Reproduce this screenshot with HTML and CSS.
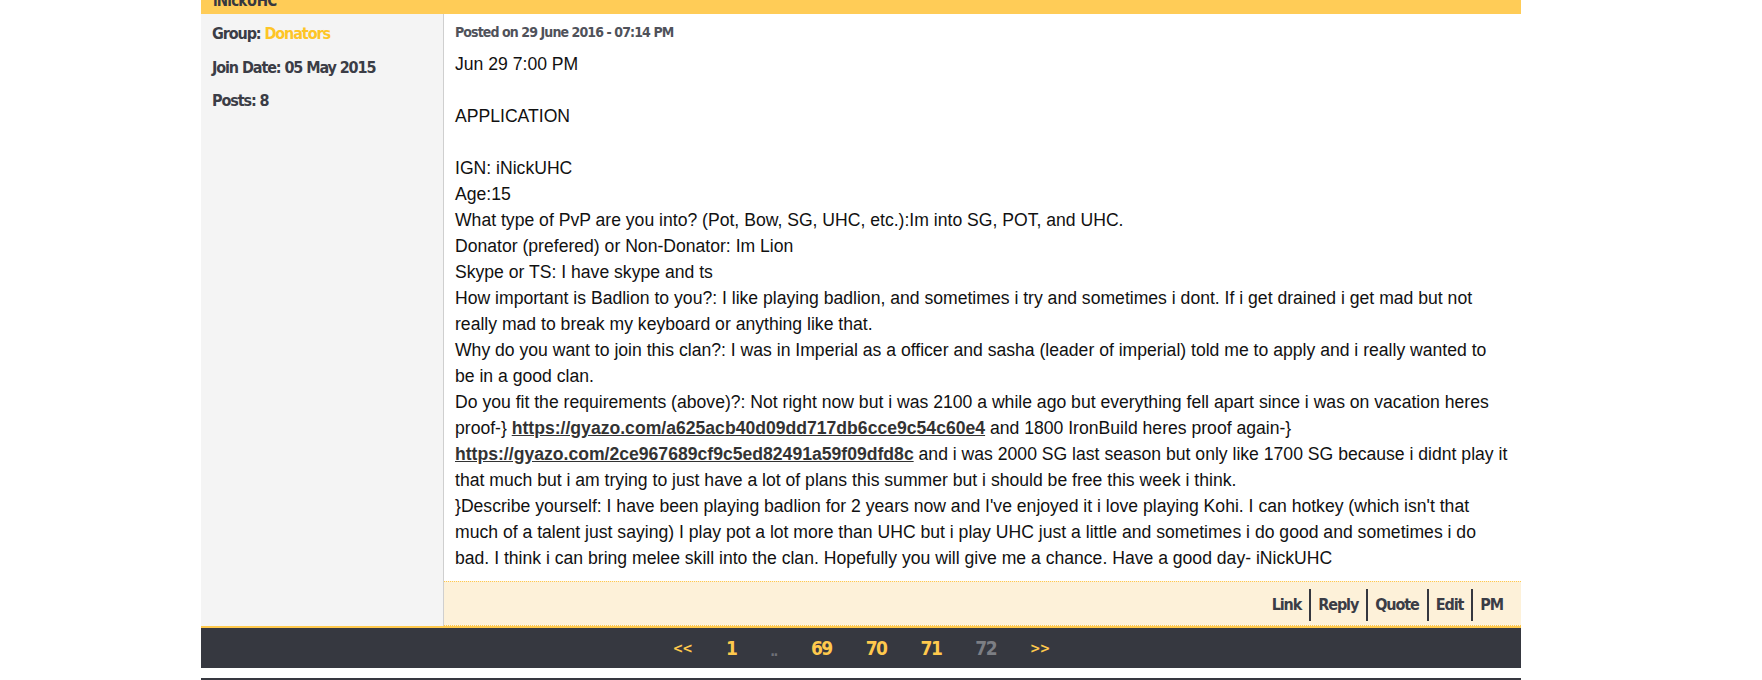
FILE: index.html
```html
<!DOCTYPE html>
<html>
<head>
    <title>iNickUHC - Application</title>
    <link rel="stylesheet" href="styles.css">
</head>
<body>
    <div class="topic">
        <div class="post">
            <div class="post-head">iNickUHC</div>
            <div class="post-main">
                <div class="author">
                    <p>Group: <span class="group">Donators</span></p>
                    <p>Join Date: 05 May 2015</p>
                    <p>Posts: 8</p>
                </div>
                <div class="post-body">
                    <div class="post-date">Posted on 29 June 2016 - 07:14 PM</div>
                    <div class="post-text">
                        Jun 29 7:00 PM<br><br>
                        APPLICATION<br><br>
                        IGN: iNickUHC<br>
                        Age:15<br>
                        What type of PvP are you into? (Pot, Bow, SG, UHC, etc.):Im into SG, POT, and UHC.<br>
                        Donator (prefered) or Non-Donator: Im Lion<br>
                        Skype or TS: I have skype and ts<br>
                        How important is Badlion to you?: I like playing badlion, and sometimes i try and sometimes i dont. If i get drained i get mad but not really mad to break my keyboard or anything like that.<br>
                        Why do you want to join this clan?: I was in Imperial as a officer and sasha (leader of imperial) told me to apply and i really wanted to be in a good clan.<br>
                        Do you fit the requirements (above)?: Not right now but i was 2100 a while ago but everything fell apart since i was on vacation heres proof-} <a href="#">https://gyazo.com/a625acb40d09dd717db6cce9c54c60e4</a> and 1800 IronBuild heres proof again-} <a href="#">https://gyazo.com/2ce967689cf9c5ed82491a59f09dfd8c</a> and i was 2000 SG last season but only like 1700 SG because i didnt play it that much but i am trying to just have a lot of plans this summer but i should be free this week i think.<br>
                        }Describe yourself: I have been playing badlion for 2 years now and I've enjoyed it i love playing Kohi. I can hotkey (which isn't that much of a talent just saying) I play pot a lot more than UHC but i play UHC just a little and sometimes i do good and sometimes i do bad. I think i can bring melee skill into the clan. Hopefully you will give me a chance. Have a good day- iNickUHC
                    </div>
                    <div class="post-actions">
                        <a href="#">Link</a><a href="#">Reply</a><a href="#">Quote</a><a href="#">Edit</a><a href="#">PM</a>
                    </div>
                </div>
            </div>
        </div>

        <div class="pager">
            <a href="#" class="arrow">&lt;&lt;</a>
            <a href="#">1</a>
            <span class="dots">..</span>
            <a href="#">69</a>
            <a href="#">70</a>
            <a href="#">71</a>
            <span class="current">72</span>
            <a href="#" class="arrow">&gt;&gt;</a>
        </div>

        <div class="next-bar"></div>
    </div>
</body>
</html>
```

FILE: styles.css
```css
body { margin: 0; background: #fff; font-family: "Liberation Sans", Arial, sans-serif; }

.topic { width: 1320px; margin: -20px 0 0 201px; }

/* narrow headline face */
.post-head, .author, .post-date, .post-actions, .pager {
    font-family: "DejaVu Sans Condensed", "DejaVu Sans", sans-serif;
    font-weight: bold;
}

.post { border-bottom: 2px solid #ffc94d; }
.post-head { background: #ffcc57; color: #363840; font-size: 15px; letter-spacing: -0.8px; line-height: 24px; padding: 9px 12px 1px; }

.post-main { display: flex; }
.author { width: 243px; flex-shrink: 0; box-sizing: border-box; background: #f4f4f4; border-right: 1px solid #cfcfcf; padding: 3px 11px 0; color: #3b3d46; font-size: 16px; letter-spacing: -1.1px; }
.author p { margin: 0; line-height: 33.5px; }
.group { color: #fec526; }

.post-body { flex: 1; display: flex; flex-direction: column; }
.post-date { color: #50525a; font-size: 14px; letter-spacing: -0.9px; line-height: 20px; padding: 8px 11px 0; }
.post-text { color: #111; font-size: 17.6px; line-height: 26px; padding: 9px 11px 10px; }
.post-text a { color: #333; font-weight: bold; }

.post-actions { display: flex; justify-content: flex-end; background: #fdf1d9; border-top: 1px dotted #ffc94d; border-bottom: 1px dotted #ffc94d; padding: 7px 11px 4px; font-size: 16px; letter-spacing: -1.1px; }
.post-actions a { color: #3b3d46; text-decoration: none; line-height: 32px; padding: 0 8px 0 7px; }
.post-actions a + a { border-left: 2px solid #35373f; }
.post-actions a:last-child { padding-right: 7px; }

.pager { display: flex; justify-content: center; align-items: center; gap: 4px; height: 40px; background: #363840; font-size: 19px; letter-spacing: -1.5px; }
.pager a, .pager span { padding: 0 15px; color: #ffc94d; text-decoration: none; }
.pager .arrow { font-size: 14px; letter-spacing: -1px; }
.pager .dots { color: #6e7078; font-size: 14px; padding-top: 6px; }
.pager .current { color: #7c7e84; }

.next-bar { height: 20px; margin-top: 10px; background: #363840; }
```
